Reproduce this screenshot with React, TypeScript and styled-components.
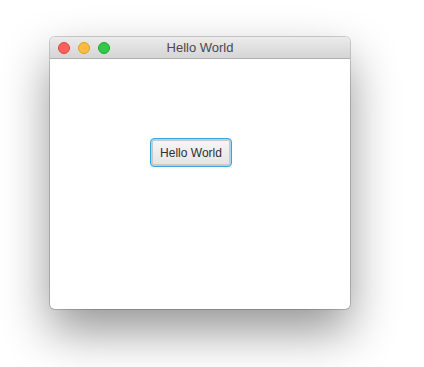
import React from 'react';
import styled, { createGlobalStyle } from 'styled-components';

const GlobalStyle = createGlobalStyle`
  html, body {
    margin: 0;
    padding: 0;
    background: #ffffff;
  }
  body {
    font-family: 'Liberation Sans', Arial, sans-serif;
  }
`;

const Desktop = styled.div`
  width: 424px;
  height: 367px;
  box-sizing: border-box;
  padding: 37px 0 0 50px;
  overflow: hidden;
  background: #ffffff;
`;

const Window = styled.div`
  width: 300px;
  height: 272px;
  display: flex;
  flex-direction: column;
  border-radius: 5px;
  overflow: hidden;
  background: #ffffff;
  box-shadow: 0 22px 48px rgba(0, 0, 0, 0.42), 0 0 0 1px rgba(0, 0, 0, 0.18);
`;

const TitleBar = styled.div`
  position: relative;
  height: 21px;
  flex: none;
  display: flex;
  align-items: center;
  justify-content: center;
  background: linear-gradient(#ebebeb, #d5d5d5);
  border-bottom: 1px solid #b0b0b0;
`;

const Lights = styled.div`
  position: absolute;
  left: 8px;
  top: 5px;
  display: flex;
  gap: 8px;
`;

const Light = styled.span<{ $fill: string; $edge: string }>`
  width: 12px;
  height: 12px;
  border-radius: 50%;
  box-sizing: border-box;
  background: ${(p) => p.$fill};
  border: 1px solid ${(p) => p.$edge};
`;

const Title = styled.div`
  font-size: 13px;
  color: #4a4a4a;
  line-height: 21px;
`;

const Content = styled.div`
  flex: 1;
  padding: 79px 0 0 100px;
`;

const Button = styled.button`
  width: 82px;
  height: 29px;
  box-sizing: border-box;
  padding: 0;
  border: 1px solid #3aa3dc;
  border-radius: 4px;
  background: linear-gradient(#f7f7f7, #e4e4e4);
  box-shadow: inset 0 0 0 1px #a9d6f1, inset 0 0 0 2px #c9c9c9;
  font-family: 'Liberation Sans', Arial, sans-serif;
  font-size: 12px;
  color: #2e2e2e;
  cursor: default;
`;

const App = (): JSX.Element => (
  <>
    <GlobalStyle />
    <Desktop>
      <Window>
        <TitleBar>
          <Lights>
            <Light $fill="#fc605c" $edge="#e0443e" />
            <Light $fill="#fdbc40" $edge="#dea123" />
            <Light $fill="#34c84a" $edge="#1aab29" />
          </Lights>
          <Title>Hello World</Title>
        </TitleBar>
        <Content>
          <Button>Hello World</Button>
        </Content>
      </Window>
    </Desktop>
  </>
);

export default App;
